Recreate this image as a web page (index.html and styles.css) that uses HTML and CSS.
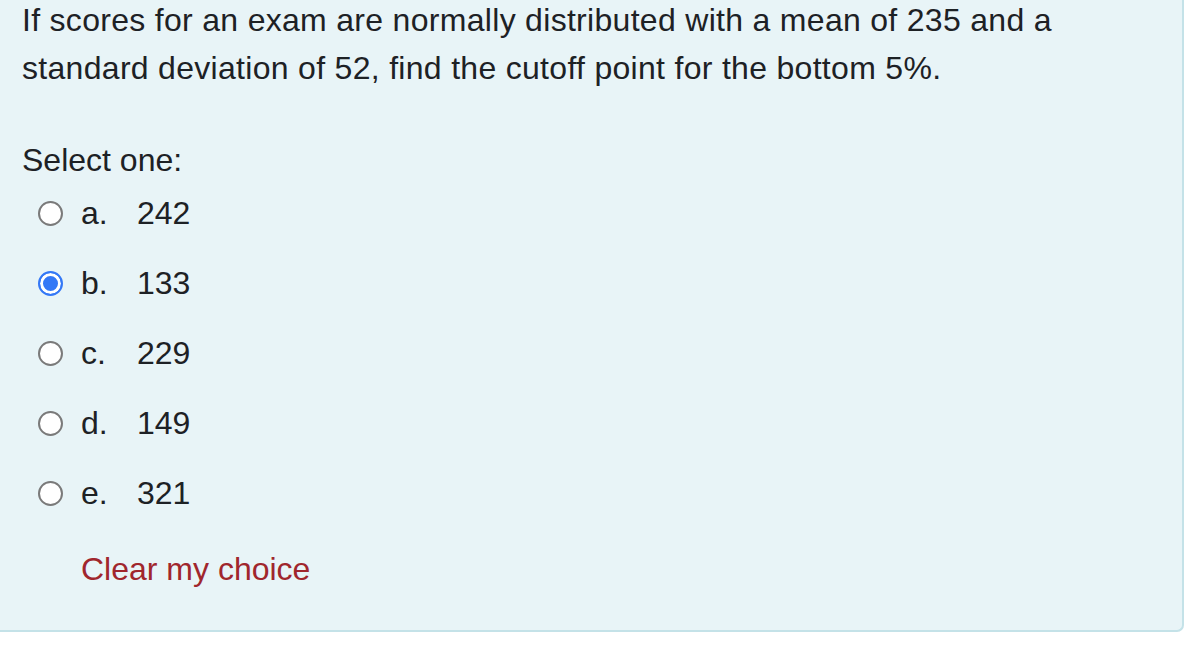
FILE: index.html
```html
<!DOCTYPE html>
<html>
<head>
<meta charset="utf-8">
<link rel="stylesheet" href="styles.css">
</head>
<body>
<div class="que">
  <div class="qtext">If scores for an exam are normally distributed with a mean of 235 and a standard deviation of 52, find the cutoff point for the bottom 5%.</div>
  <div class="prompt">Select one:</div>
  <div class="answers">
    <div class="opt"><span class="radio"></span><span class="num">a.</span><span class="val">242</span></div>
    <div class="opt"><span class="radio checked"></span><span class="num">b.</span><span class="val">133</span></div>
    <div class="opt"><span class="radio"></span><span class="num">c.</span><span class="val">229</span></div>
    <div class="opt"><span class="radio"></span><span class="num">d.</span><span class="val">149</span></div>
    <div class="opt"><span class="radio"></span><span class="num">e.</span><span class="val">321</span></div>
  </div>
  <div class="clear">Clear my choice</div>
</div>
</body>
</html>
```
FILE: styles.css
```css
html, body {
  margin: 0;
  padding: 0;
  background: #ffffff;
}
body {
  font-family: "Liberation Sans", Arial, sans-serif;
  color: #1d2125;
  font-size: 32px;
  line-height: 48px;
}
.que {
  margin: -20px 0 0 -20px;
  padding: 16px 0 37px 42px;
  background: #e8f4f7;
  border: 2px solid #c4e2e8;
  border-top: none;
  border-left: none;
  border-radius: 0 0 7px 0;
  width: 1160px;
}
.qtext {
  width: 1080px;
  letter-spacing: 0.3px;
}
.prompt {
  margin-top: 44px;
}
.answers {
  margin-top: 5px;
  display: flex;
  flex-direction: column;
  gap: 22px;
}
.opt {
  display: flex;
  align-items: center;
  padding-left: 16px;
}
.radio {
  width: 25px;
  height: 25px;
  box-sizing: border-box;
  border-radius: 50%;
  border: 2px solid #7a7a7a;
  background: #ffffff;
  margin-right: 18px;
  flex: none;
}
.radio.checked {
  border: 2.5px solid #3478f6;
  background: #3478f6;
  box-shadow: inset 0 0 0 3px #ffffff;
}
.num {
  width: 56px;
}
.clear {
  margin-top: 28px;
  padding-left: 59px;
  color: #a0262d;
}
```
